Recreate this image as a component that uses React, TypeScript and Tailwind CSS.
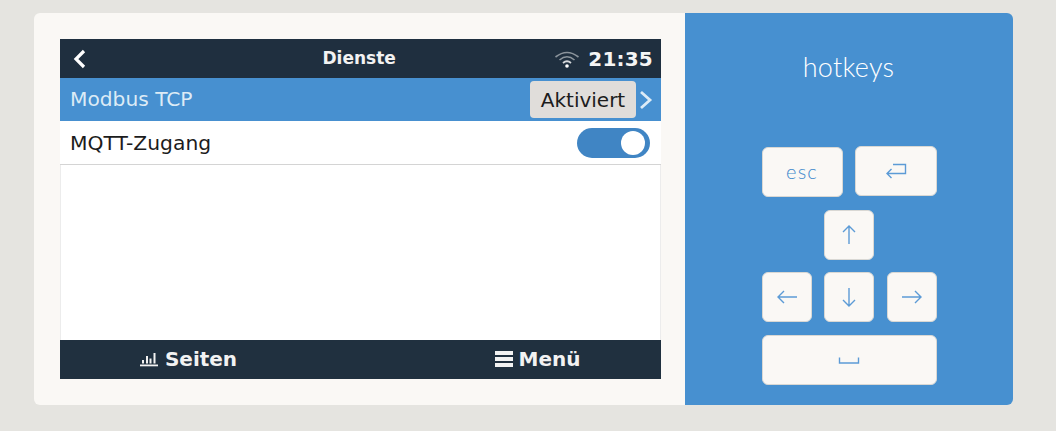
const Key = ({ className = "", children }: { className?: string; children?: React.ReactNode }) => (
  <div className={`flex h-[50px] items-center justify-center rounded-[6px] border border-[#d9d8d4] bg-[#faf8f5] text-[#3f89cc] ${className}`}>
    {children}
  </div>
);

const Arrow = ({ d, className = "" }: { d: string; className?: string }) => (
  <svg viewBox="0 0 24 24" className={`h-6 w-6 ${className}`} fill="none" stroke="#5c9bd6" strokeWidth="1.4">
    <path d={d} />
  </svg>
);

export default function App() {
  return (
    <div className="h-[431px] w-[1056px] bg-[#e5e4e0] pl-[34px] pt-[13px] font-['Liberation_Sans',sans-serif]">
      <div className="flex h-[392px] w-[979px] overflow-hidden rounded-[6px]">
        <div className="w-[651px] bg-[#faf8f5] pl-[26px] pt-[26px]">
          <div className="flex h-[340px] w-[601px] flex-col bg-white font-['DejaVu_Sans',sans-serif]">
            <div className="flex h-[39px] items-center justify-between bg-[#1f2f3f] pl-3 pr-2 text-white">
              <svg viewBox="0 0 14 20" className="h-5 w-[14px]" fill="none" stroke="white" strokeWidth="3.2">
                <path d="M12 2 L4 10 L12 18" />
              </svg>
              <span className="ml-[78px] text-[17px] font-bold leading-none text-[#f2f2f2]">Dienste</span>
              <div className="flex items-center gap-[8px]">
                <svg viewBox="0 0 26 20" className="h-5 w-[26px]" fill="none" stroke="#8b949c" strokeWidth="1.6">
                  <path d="M1.5 8 Q13 -1 24.5 8" />
                  <path d="M5.5 11 Q13 4.5 20.5 11" />
                  <path d="M9 14 Q13 10.5 17 14" stroke="#d5d8db" strokeWidth="1.8" />
                  <circle cx="13" cy="17" r="1.8" fill="white" stroke="none" />
                </svg>
                <span className="text-[20px] font-bold leading-none tracking-[0.2px] text-[#f5f5f5]">21:35</span>
              </div>
            </div>
            <div className="flex h-[43px] items-center justify-between bg-[#4790d0] pl-[10px] pr-[8px]">
              <span className="text-[20.2px] leading-none text-[#dcebf6]">Modbus TCP</span>
              <div className="flex items-center gap-[3px]">
                <span className="flex h-[37px] w-[106px] items-center justify-center rounded-[4px] bg-[#e0ddda] text-[20px] leading-none text-[#1c1c1c]">Aktiviert</span>
                <svg viewBox="0 0 14 20" className="h-5 w-[14px]" fill="none" stroke="#dcebf6" strokeWidth="2.8">
                  <path d="M2 2 L11 10 L2 18" />
                </svg>
              </div>
            </div>
            <div className="flex h-[44px] items-center justify-between border-b border-[#d4d4d4] pl-[10px] pr-[11px]">
              <span className="pt-[1px] text-[20.3px] leading-none text-[#1c1c1c]">MQTT-Zugang</span>
              <div className="mt-[1px] flex h-[30px] w-[73px] items-center justify-end rounded-full bg-[#4085c4] pr-[5px]">
                <div className="h-[24px] w-[24px] rounded-full bg-white" />
              </div>
            </div>
            <div className="flex-1 border-x border-[#ececec]" />
            <div className="flex h-[39px] items-center bg-[#20303f] pb-[1px] text-[20px] font-bold leading-none text-[#f2f2f2]">
              <div className="flex w-[300px] items-center justify-center gap-[6px] pr-[44px]">
                <svg viewBox="0 0 20 16" className="h-4 w-5" fill="#f2f2f2">
                  <rect x="3" y="9" width="2" height="3.5" />
                  <rect x="7" y="5" width="2" height="7.5" />
                  <rect x="10.5" y="7.5" width="2" height="5" />
                  <rect x="14.5" y="2" width="2" height="10.5" />
                  <rect x="1" y="13.5" width="18" height="1.8" />
                </svg>
                <span>Seiten</span>
              </div>
              <div className="flex w-[301px] items-center justify-center gap-[6px] pl-[54px]">
                <div className="flex w-[18px] flex-col gap-[2px]">
                  <div className="h-[4px] bg-[#f2f2f2]" />
                  <div className="h-[4px] bg-[#f2f2f2]" />
                  <div className="h-[4px] bg-[#f2f2f2]" />
                </div>
                <span>Menü</span>
              </div>
            </div>
          </div>
        </div>
        <div className="flex w-[328px] flex-col items-center bg-[#4790d0] font-['Lato',sans-serif]">
          <div className="mt-[38px] ml-[-1px] text-[27px] font-light leading-[32px] tracking-[0.3px] text-white">hotkeys</div>
          <div className="mt-[63px] w-[175px]">
            <div className="flex justify-between">
              <Key className="mt-[1px] w-[81px] pb-[2px] text-[20px] font-light tracking-[1.2px]">esc</Key>
              <Key className="w-[82px]">
                <Arrow d="M9 5.5 H21.5 V14.5 H3 M7.5 10 L3 14.5 L7.5 19" />
              </Key>
            </div>
            <div className="mt-[13px] flex justify-center">
              <Key className="w-[50px]">
                <Arrow d="M12 21 V3 M6 9 L12 3 L18 9" />
              </Key>
            </div>
            <div className="mt-[12px] flex justify-between">
              <Key className="w-[50px]">
                <Arrow d="M22 12 H3 M9 6 L3 12 L9 18" />
              </Key>
              <Key className="w-[50px]">
                <Arrow d="M12 3 V21 M6 15 L12 21 L18 15" />
              </Key>
              <Key className="w-[50px]">
                <Arrow d="M2 12 H21 M15 6 L21 12 L15 18" />
              </Key>
            </div>
            <Key className="mt-[13px] w-[175px]">
              <Arrow d="M2.5 9.5 V15 H21.5 V9.5" />
            </Key>
          </div>
        </div>
      </div>
    </div>
  );
}
